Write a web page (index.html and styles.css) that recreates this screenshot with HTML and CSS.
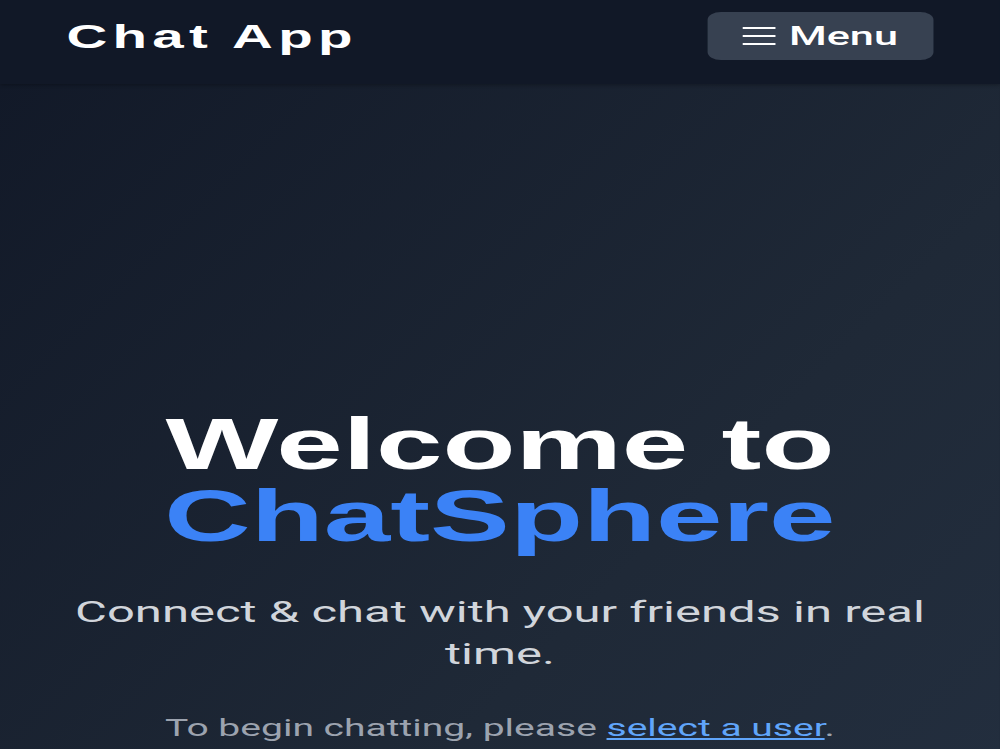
FILE: index.html
```html
<!DOCTYPE html>
<html lang="en">
<head>
  <meta charset="UTF-8" />
  <meta name="viewport" content="width=device-width, initial-scale=1.0" />
  <title>Chat App</title>
  <link rel="stylesheet" href="styles.css">
</head>
<body>
  <div class="app">
    <header class="navbar">
      <div class="brand">Chat App</div>
      <button class="menu-btn">
        <svg class="menu-icon" viewBox="0 0 20 18" width="20" height="18" aria-hidden="true">
          <path d="M0 1h20M0 9h20M0 17h20" stroke="currentColor" stroke-width="2" fill="none" />
        </svg>
        <span>Menu</span>
      </button>
    </header>

    <main class="hero">
      <h1 class="hero-title">Welcome to <span class="accent">ChatSphere</span></h1>
      <p class="hero-lead">Connect &amp; chat with your friends in real time.</p>
      <p class="hero-hint">To begin chatting, please <a href="#">select a user</a>.</p>
    </main>
  </div>
</body>
</html>
```

FILE: styles.css
```css
html, body {
  margin: 0;
  padding: 0;
  background: #111827;
  overflow: hidden;
}
/* the screen is a phone capture spread out sideways */
.app {
  width: 602px;
  min-height: 1000px;
  transform: scaleX(1.661);
  transform-origin: 0 0;
  font-family: Roboto, "Liberation Sans", sans-serif;
  background: linear-gradient(to bottom right, #111827, #1f2937 60%, #243041);
  color: #e5e7eb;
}
.navbar {
  display: flex;
  justify-content: space-between;
  align-items: center;
  padding: 12px 40px 24px 40px;
  background-color: #111827;
  box-shadow: 0 1px 3px rgba(0, 0, 0, 0.3);
  position: relative;
}
.brand {
  font-family: "Liberation Sans", Arial, sans-serif;
  font-size: 34px;
  font-weight: bold;
  letter-spacing: 3.2px;
  color: #fff;
  line-height: 48px;
}
.menu-btn {
  display: flex;
  align-items: center;
  gap: 8px;
  width: 136px;
  height: 48px;
  padding: 0 21px;
  background-color: #374151;
  color: #fff;
  border: none;
  border-radius: 8px;
  font-family: Roboto, sans-serif;
  font-size: 26px;
  font-weight: 500;
  cursor: pointer;
}
.menu-icon {
  flex: none;
}
.hero {
  padding: 324px 24px 0;
  text-align: center;
}
.hero-title {
  margin: 0;
  font-family: "Liberation Sans", Arial, sans-serif;
  font-size: 72px;
  line-height: 72px;
  font-weight: bold;
  color: #fff;
}
.accent {
  display: block;
  color: #3b82f6;
}
.hero-lead {
  margin: 39px 0 0;
  font-size: 29.5px;
  line-height: 42px;
  color: #d1d5db;
}
.hero-hint {
  margin: 35px 0 0;
  font-size: 23.5px;
  line-height: 36px;
  color: #9ca3af;
}
.hero-hint a {
  color: #60a5fa;
}
```
